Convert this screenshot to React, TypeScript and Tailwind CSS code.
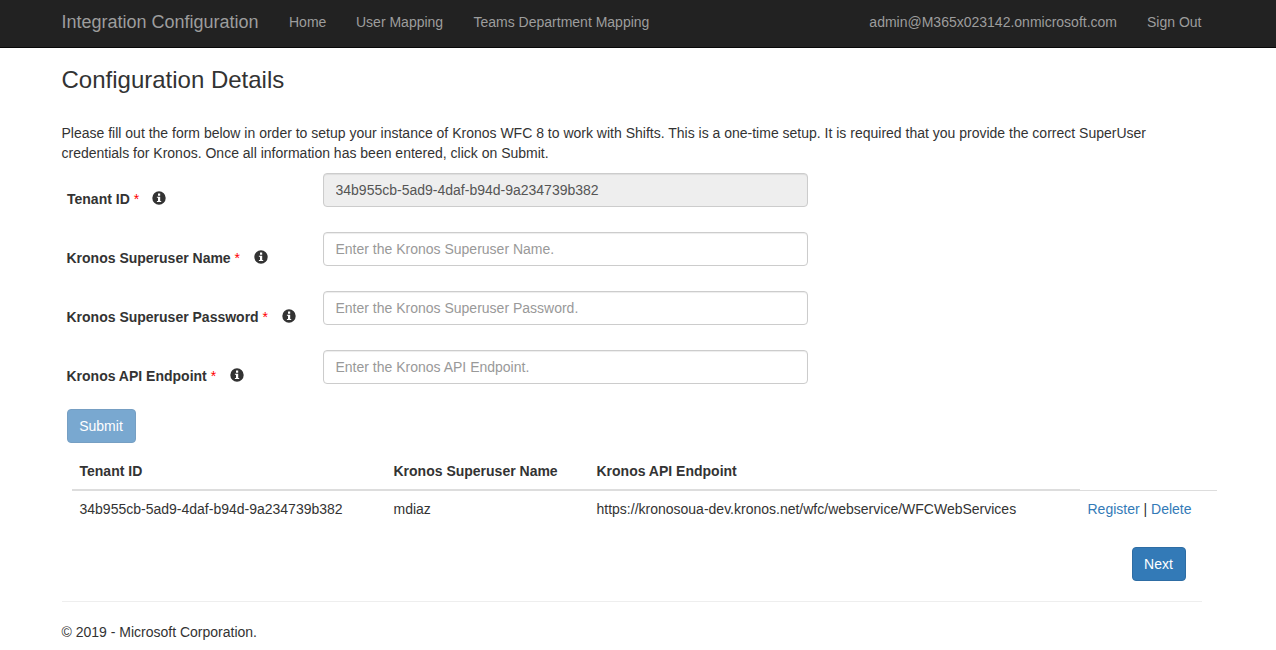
import React from 'react';

const tenantId = '34b955cb-5ad9-4daf-b94d-9a234739b382';

type Field = { label: string; placeholder?: string; value?: string; pad: string; iconGap: string };

const fields: Field[] = [
  { label: 'Tenant ID', value: tenantId, pad: 'pl-[5.5px]', iconGap: 'ml-[13px]' },
  {
    label: 'Kronos Superuser Name',
    placeholder: 'Enter the Kronos Superuser Name.',
    pad: 'pl-[5px]',
    iconGap: 'ml-[14px]',
  },
  {
    label: 'Kronos Superuser Password',
    placeholder: 'Enter the Kronos Superuser Password.',
    pad: 'pl-[5px]',
    iconGap: 'ml-[14px]',
  },
  {
    label: 'Kronos API Endpoint',
    placeholder: 'Enter the Kronos API Endpoint.',
    pad: 'pl-[5px]',
    iconGap: 'ml-[14px]',
  },
];

function InfoIcon({ gap }: { gap: string }) {
  return (
    <svg viewBox="0 0 14 14" className={`-mt-[3px] size-[14px] shrink-0 ${gap}`} fill="#333">
      <path
        fillRule="evenodd"
        d="M7 .3a6.7 6.7 0 1 1 0 13.4A6.7 6.7 0 0 1 7 .3ZM6 2.6v2.1h2.2V2.6ZM4.9 5.7v1.1H6V10H4.9v1.1h4.3V10H8.2V5.7Z"
      />
    </svg>
  );
}

function Navbar() {
  return (
    <header className="h-12 border-b border-[#080808] bg-[#222] text-[#9d9d9d]">
      <nav className="ml-[61.5px] flex h-[43px] w-[1140px] items-center">
        <a className="w-[227.5px] text-[18px] leading-5">Integration Configuration</a>
        <a className="w-[67px]">Home</a>
        <a className="w-[117.5px]">User Mapping</a>
        <a>Teams Department Mapping</a>
        <a className="ml-auto mr-[30px]">admin@M365x023142.onmicrosoft.com</a>
        <a>Sign Out</a>
      </nav>
    </header>
  );
}

function FormRow({ label, placeholder, value, pad, iconGap }: Field) {
  return (
    <div className="mb-[25px] flex h-[34px]">
      <div className={`mt-4 flex h-5 w-[261px] items-center ${pad}`}>
        <label className="whitespace-nowrap font-bold">
          {label} <span className="font-normal text-[#f00]">*</span>
        </label>
        <InfoIcon gap={iconGap} />
      </div>
      <input
        className="h-[34px] w-[485px] rounded-[4px] border border-[#ccc] bg-white px-3 py-1.5 text-[#555] shadow-[inset_0_1px_1px_rgba(0,0,0,0.075)] outline-none placeholder:text-[#999] read-only:bg-[#eee]"
        placeholder={placeholder}
        defaultValue={value}
        readOnly={value !== undefined}
      />
    </div>
  );
}

export default function App() {
  return (
    <div className="h-[650px] overflow-hidden bg-white font-['Liberation_Sans',Arial,sans-serif] text-[14px] leading-5 text-[#333]">
      <Navbar />
      <main className="ml-[61.5px] w-[1140px]">
        <h3 className="pt-[19px] text-[24px] leading-[26px]">Configuration Details</h3>
        <p className="mt-[30px] h-[50px] w-[1110px]">
          Please fill out the form below in order to setup your instance of Kronos WFC 8 to work with Shifts. This is a
          one-time setup. It is required that you provide the correct SuperUser credentials for Kronos. Once all
          information has been entered, click on Submit.
        </p>
        <form>
          {fields.map((f) => (
            <FormRow key={f.label} {...f} />
          ))}
          <button
            type="button"
            disabled
            className="ml-[5px] block h-[34px] w-[69px] rounded-[4px] border border-[#2e6da4] bg-[#337ab7] text-white opacity-65"
          >
            Submit
          </button>
        </form>
        <table className="ml-[10px] mt-[10px] w-[1145px] table-fixed border-collapse text-left">
          <colgroup>
            <col className="w-[314px]" />
            <col className="w-[203px]" />
            <col className="w-[491px]" />
            <col className="w-[137px]" />
          </colgroup>
          <thead>
            <tr className="h-[37px]">
              <th className="border-b-2 border-[#ddd] px-2 font-bold">Tenant ID</th>
              <th className="border-b-2 border-[#ddd] px-2 font-bold">Kronos Superuser Name</th>
              <th className="border-b-2 border-[#ddd] px-2 font-bold">Kronos API Endpoint</th>
              <td />
            </tr>
          </thead>
          <tbody>
            <tr className="h-[37px]">
              <td className="border-t border-[#ddd] px-2">{tenantId}</td>
              <td className="border-t border-[#ddd] px-2">mdiaz</td>
              <td className="border-t border-[#ddd] px-2">
                https://kronosoua-dev.kronos.net/wfc/webservice/WFCWebServices
              </td>
              <td className="whitespace-nowrap border-t border-[#ddd] px-2">
                <a className="text-[#337ab7]">Register</a> | <a className="text-[#337ab7]">Delete</a>
              </td>
            </tr>
          </tbody>
        </table>
        <div className="mt-5 flex justify-end pr-4">
          <button
            type="button"
            className="h-[34px] w-[54px] rounded-[4px] border border-[#2e6da4] bg-[#337ab7] text-white"
          >
            Next
          </button>
        </div>
        <footer className="mt-5 border-t border-[#eee] pt-5">© 2019 - Microsoft Corporation.</footer>
      </main>
    </div>
  );
}
